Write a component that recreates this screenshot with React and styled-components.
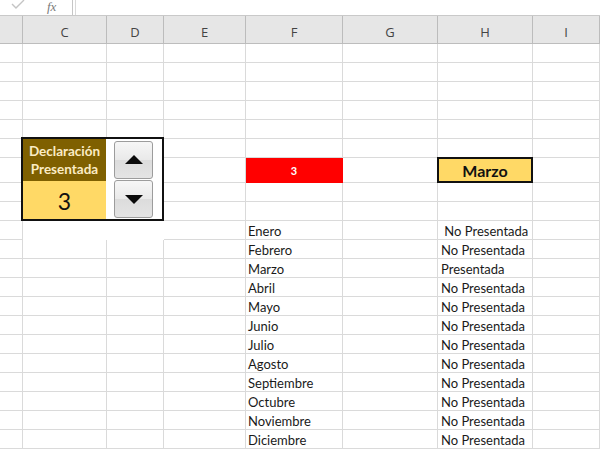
import React from 'react'
import styled, {createGlobalStyle} from 'styled-components'

const GlobalStyle = createGlobalStyle`
  html, body {
    margin: 0;
    padding: 0;
    background: #ffffff;
  }
  body {
    font-family: 'Lato', 'Noto Sans', sans-serif;
    overflow: hidden;
  }
  * {
    box-sizing: border-box;
  }
`

const columns = [23, 84, 57, 82, 97, 95, 95, 67]
const letters = ['', 'C', 'D', 'E', 'F', 'G', 'H', 'I']
const topRows = [19, 19, 19, 19, 19, 19, 25, 19, 19]

const months = [
    'Enero', 'Febrero', 'Marzo', 'Abril', 'Mayo', 'Junio', 'Julio',
    'Agosto', 'Septiembre', 'Octubre', 'Noviembre', 'Diciembre'
]
const selected = 3

const rowHeights = [...topRows, ...months.map(() => 19)]

const Sheet = styled.div `
  width: 600px;
  height: 450px;
  overflow: hidden;
  display: flex;
  flex-direction: column;
`

const FormulaBar = styled.div `
  height: 16px;
  flex: none;
  display: flex;
  overflow: hidden;
  background: #ffffff;
  border-bottom: 1px solid #c9c9c9;
`

const BarTools = styled.div `
  width: 73px;
  height: 15px;
  display: flex;
  align-items: flex-start;
  gap: 22px;
  padding-left: 11px;
  border-right: 1px solid #c6c6c6;
  svg {
    display: block;
  }
`

const Fx = styled.span `
  font-family: 'Liberation Serif', serif;
  font-style: italic;
  font-size: 13px;
  line-height: 13px;
  color: #7a7a7a;
  margin-top: 0;
`

const BarInput = styled.div `
  flex: 1;
  height: 15px;
  margin-left: 2px;
  border-left: 1px solid #d9d9d9;
`

const Grid = styled.div `
  flex: 1;
  display: grid;
  grid-template-columns: ${({$cols}) => $cols.map((c) => c + 'px').join(' ')};
  grid-template-rows: 28px ${({$rows}) => $rows.map((r) => r + 'px').join(' ')};
`

const HeadCell = styled.div `
  background: #e6e6e6;
  border-bottom: 1px solid #bdbdbd;
  border-right: 1px solid #bcbcbc;
  display: flex;
  align-items: center;
  justify-content: center;
  padding-top: 4px;
  font-family: 'Open Sans', 'Noto Sans', sans-serif;
  font-size: 13px;
  color: #444444;
`

const Cell = styled.div `
  grid-column: ${({$col}) => $col};
  grid-row: ${({$row}) => $row};
  border-right: 1px solid #dadada;
  border-bottom: 1px solid #dadada;
  display: flex;
  align-items: center;
  padding-left: ${({$pad}) => $pad || 2}px;
  padding-top: 1px;
  font-size: 13px;
  color: #1a1a1a;
  white-space: pre;
`

const FlagCell = styled(Cell)`
  background: #ff0000;
  border-color: #ff0000;
  justify-content: center;
  padding-left: 0;
  font-weight: 700;
  font-size: 11px;
  color: #ffffff;
`

const MonthCell = styled(Cell)`
  margin: -1px 0 0 -1px;
  background: #ffd966;
  border: 2px solid #111111;
  justify-content: center;
  padding: 0;
  font-weight: 700;
  font-size: 16px;
  color: #111111;
`

const ControlBox = styled.div `
  grid-column: 2 / span 2;
  grid-row: 7 / span 4;
  margin: -2px 0 0 -2px;
  border: 2px solid #111111;
  background: #ffffff;
  display: grid;
  grid-template-columns: 83px 1fr;
  grid-template-rows: 42px 1fr;
`

const Title = styled.div `
  background: #7f6000;
  color: #fbecc4;
  font-weight: 700;
  font-size: 13.5px;
  line-height: 18px;
  text-align: center;
  padding-top: 3px;
  white-space: nowrap;
`

const Value = styled.div `
  background: #ffd966;
  display: flex;
  align-items: center;
  justify-content: center;
  font-size: 23px;
  color: #111111;
  padding-top: 1px;
`

const Spinner = styled.div `
  grid-column: 2;
  grid-row: 1 / span 2;
  display: flex;
  flex-direction: column;
  gap: 1px;
  padding: 2px 0 0 8px;
`

const SpinButton = styled.button `
  width: 39px;
  height: 38px;
  padding: 0;
  border: 1px solid #9c9c9c;
  border-radius: 3px;
  background: linear-gradient(#f6f6f6, #e9e9e9 50%, #dcdcdc 51%, #e4e4e4);
  display: flex;
  align-items: center;
  justify-content: center;
  svg {
    display: block;
  }
`

const Arrow = ({down}) => (
    <svg width='18' height='10' viewBox='0 0 18 10'>
        <polygon points={down ? '0,1 18,1 9,10' : '0,9 18,9 9,0'} fill='#0a0a0a'/>
    </svg>
)

const App = () => {
    let firstRow = topRows.length + 2

    return (
        <Sheet>
            <GlobalStyle/>
            {/* formula bar */}
            <FormulaBar>
                <BarTools>
                    <svg width='14' height='10' viewBox='0 0 14 10'>
                        <path d='M1 4 L5 8 L13 0' fill='none' stroke='#c4c4c4' strokeWidth='1.4'/>
                    </svg>
                    <Fx>fx</Fx>
                </BarTools>
                <BarInput/>
            </FormulaBar>
            {/* end of formula bar */}
            <Grid $cols={columns} $rows={rowHeights}>
                {letters.map((letter, index) => <HeadCell key={'h' + index}>{letter}</HeadCell>)}

                {rowHeights.map((_, r) => columns.map((_, c) => {
                    const row = r + 2
                    const col = c + 1
                    if ((col === 2 || col === 3) && row >= 8 && row <= 11) {
                        return null
                    }
                    if (row === 8 && col === 5) {
                        return <FlagCell key={r + '-' + c} $row={row} $col={col}>{selected}</FlagCell>
                    }
                    if (row === 8 && col === 7) {
                        return <MonthCell key={r + '-' + c} $row={row} $col={col}>{months[selected - 1]}</MonthCell>
                    }
                    let text = ''
                    let pad = 2
                    const m = row - firstRow
                    if (m >= 0 && m < months.length) {
                        if (col === 5) {
                            text = months[m]
                        }
                        if (col === 7) {
                            pad = 3
                            text = m + 1 === selected
                                ? 'Presentada'
                                : (m === 0 ? ' No Presentada' : 'No Presentada')
                        }
                    }
                    return <Cell key={r + '-' + c} $row={row} $col={col} $pad={pad}>{text}</Cell>
                }))}

                {/* spin control */}
                <ControlBox>
                    <Title>Declaración<br/>Presentada</Title>
                    <Value>{selected}</Value>
                    <Spinner>
                        <SpinButton type='button'><Arrow/></SpinButton>
                        <SpinButton type='button'><Arrow down/></SpinButton>
                    </Spinner>
                </ControlBox>
                {/* end of spin control */}
            </Grid>
        </Sheet>
    )
}

export default App
